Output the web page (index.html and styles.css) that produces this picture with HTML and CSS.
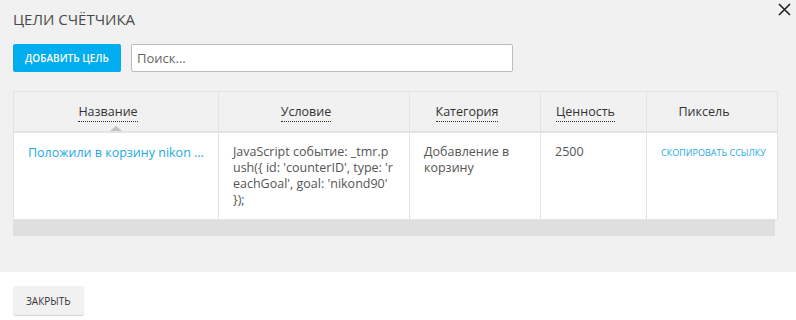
FILE: index.html
```html
<!DOCTYPE html>
<html lang="ru">
  <head>
    <meta charset="UTF-8" />
    <meta name="viewport" content="width=device-width, initial-scale=1.0" />
    <title>Цели счётчика</title>
    <link rel="stylesheet" href="styles.css">
  </head>
  <body>
    <div class="modal">
      <div class="modal-body">
        <h2 class="title">Цели счётчика</h2>
        <button class="close" title="Закрыть">
          <svg width="13" height="13" viewBox="0 0 13 13">
            <path d="M1 1 L12 12 M12 1 L1 12" stroke="#222" stroke-width="1.6" fill="none" />
          </svg>
        </button>
        <div class="toolbar">
          <button class="btn-add">Добавить цель</button>
          <input class="search" type="text" placeholder="Поиск..." />
        </div>
        <div class="grid">
          <table>
            <colgroup>
              <col class="c-name" />
              <col class="c-cond" />
              <col class="c-cat" />
              <col class="c-val" />
              <col class="c-pix" />
            </colgroup>
            <thead>
              <tr>
                <th class="sorted"><span class="sort">Название</span><i class="arrow"></i></th>
                <th><span class="sort">Условие</span></th>
                <th><span class="sort">Категория</span></th>
                <th><span class="sort">Ценность</span></th>
                <th>Пиксель</th>
              </tr>
            </thead>
            <tbody>
              <tr>
                <td class="name"><a href="#">Положили в корзину nikon ...</a></td>
                <td class="cond">JavaScript событие: _tmr.push({ id: 'counterID', type: 'reachGoal', goal: 'nikond90' });</td>
                <td>Добавление в корзину</td>
                <td>2500</td>
                <td><a class="copy" href="#">Скопировать ссылку</a></td>
              </tr>
            </tbody>
          </table>
          <div class="scrollbar"></div>
        </div>
      </div>
      <div class="modal-footer">
        <button class="btn-close">Закрыть</button>
      </div>
    </div>
  </body>
</html>
```

FILE: styles.css
```css
* {
  padding: 0;
  margin: 0;
  box-sizing: border-box;
}
body {
  font-family: "Open Sans", "Liberation Sans", sans-serif;
  color: #555;
  background: #fff;
}
.modal-body {
  position: relative;
  background: #f1f1f1;
  padding: 9px 18px 36px 13px;
}
.title {
  font-size: 15px;
  line-height: 20px;
  font-weight: normal;
  text-transform: uppercase;
  color: #4a4a4a;
}
.close {
  position: absolute;
  top: 3px;
  right: 5px;
  width: 13px;
  height: 13px;
  border: none;
  background: none;
  display: flex;
}
.toolbar {
  display: flex;
  gap: 10px;
  margin-top: 15px;
  height: 28px;
}
.btn-add {
  width: 108px;
  border: none;
  border-radius: 2px;
  background: #00adef;
  color: #fff;
  font-family: inherit;
  font-size: 10px;
  font-weight: 600;
  text-transform: uppercase;
}
.search {
  width: 382px;
  border: 1px solid #bdbdbd;
  border-radius: 2px;
  padding-left: 5px;
  font-family: inherit;
  font-size: 13px;
  color: #555;
  outline: none;
}
.search::placeholder {
  color: #666;
}
.grid {
  margin-top: 19px;
}
table {
  width: 765px;
  table-layout: fixed;
  border-collapse: separate;
  border-spacing: 0;
  border-left: 1px solid #e3e3e3;
  border-top: 1px solid #e3e3e3;
}
.c-name { width: 205px; }
.c-cond { width: 191px; }
.c-cat { width: 131px; }
.c-val { width: 106px; }
.c-pix { width: 131px; }
th {
  position: relative;
  height: 41px;
  padding: 0 20px 0 4px;
  font-size: 12.5px;
  font-weight: normal;
  color: #333;
  text-align: center;
  vertical-align: middle;
  border-right: 1px solid #e3e3e3;
  border-bottom: 2px solid #e3e3e3;
}
.sort {
  border-bottom: 1px dotted #333;
  padding-bottom: 1px;
}
.arrow {
  position: absolute;
  left: 50%;
  bottom: 0;
  margin-left: -6px;
  border-left: 6px solid transparent;
  border-right: 6px solid transparent;
  border-bottom: 5px solid #c2c2c2;
}
td {
  background: #fff;
  height: 87px;
  padding: 11px 14px 10px;
  font-size: 12.5px;
  line-height: 16px;
  vertical-align: top;
  border-right: 1px solid #e3e3e3;
  border-bottom: 1px solid #e3e3e3;
}
td a {
  color: #22aae3;
  text-decoration: none;
}
.name {
  white-space: nowrap;
  overflow: hidden;
  padding-top: 12px;
}
.cond {
  word-break: break-all;
}
.copy {
  font-size: 9px;
  font-weight: 500;
  white-space: nowrap;
  text-transform: uppercase;
}
.scrollbar {
  width: 762px;
  height: 16px;
  background: #dfdfdf;
}
.modal-footer {
  padding: 14px 13px;
}
.btn-close {
  height: 29px;
  padding: 0 13px;
  border: none;
  border-radius: 3px;
  background: #f1f1f1;
  box-shadow: 0 1px 1px rgba(0, 0, 0, 0.18);
  font-family: inherit;
  font-size: 10px;
  color: #333;
  text-transform: uppercase;
}
```
